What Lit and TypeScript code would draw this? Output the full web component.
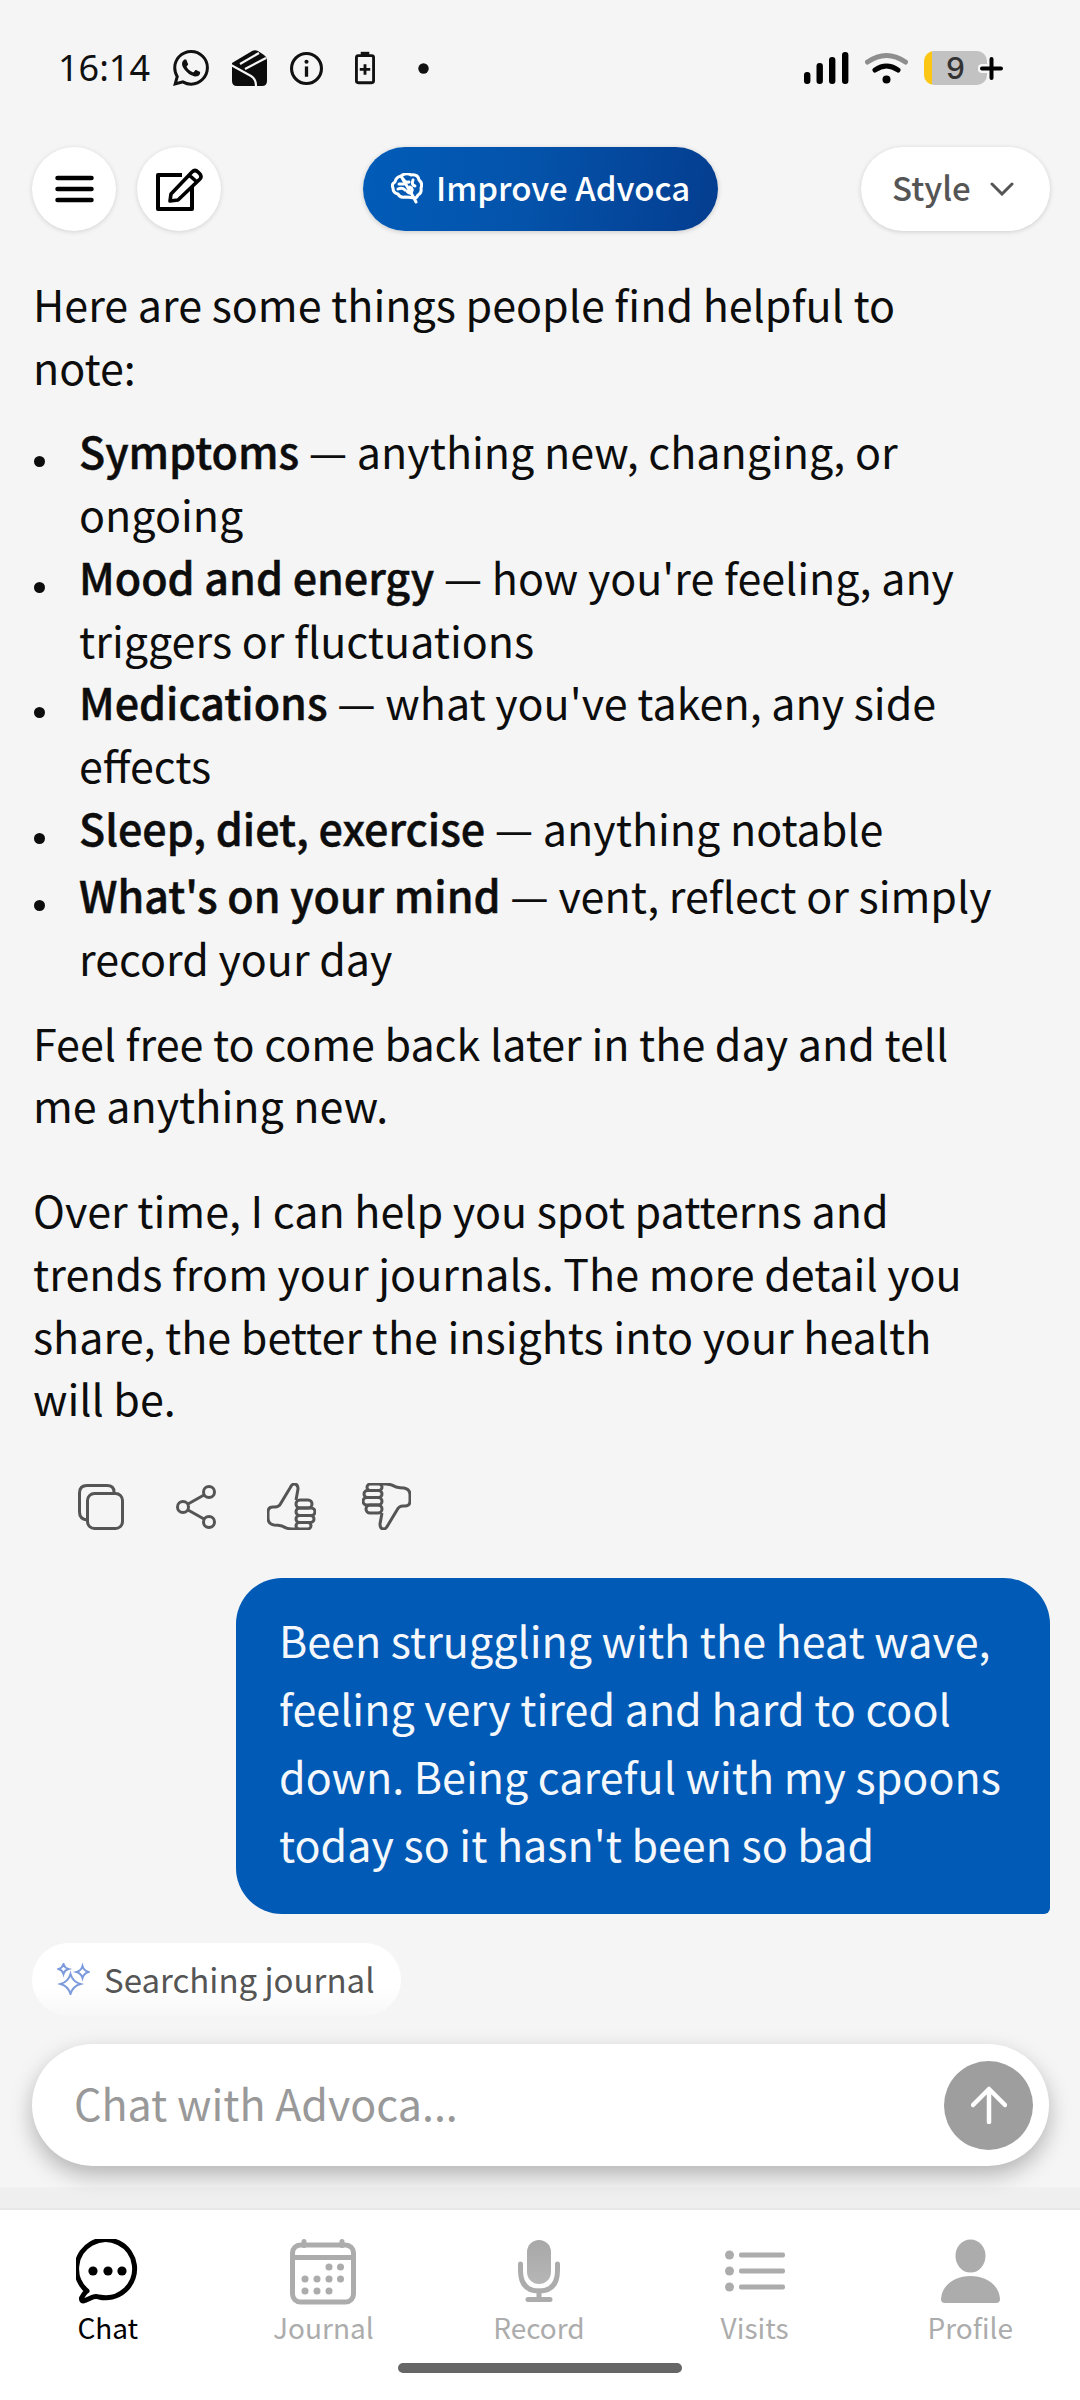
import { LitElement, html, css, svg } from "lit";
import { customElement } from "lit/decorators.js";

const thumb = svg`<path d="M29 17 L31 6 Q31 1 27 1 Q25 1 23 5 L14 20 Q12 24 8 24 H6 Q1 24 1 29 V35 Q1 41 7 42 Q11 42 15 43 Q20 46 25 46 H30"/>
  <rect x="29" y="17" width="16" height="8" rx="4"/><rect x="29" y="25" width="19" height="7.5" rx="3.7"/><rect x="29" y="32.5" width="18" height="7" rx="3.5"/><rect x="29" y="39.5" width="15" height="6.5" rx="3.2"/>`;

const star = (cx: number, cy: number, r: number) => {
  const k = r * 0.22;
  return svg`<path d="M${cx} ${cy - r} Q${cx + k} ${cy - k} ${cx + r} ${cy} Q${cx + k} ${cy + k} ${cx} ${cy + r} Q${cx - k} ${cy + k} ${cx - r} ${cy} Q${cx - k} ${cy - k} ${cx} ${cy - r}Z"/>`;
};

const navItems = [
  { label: "Chat", active: true, icon: svg`<svg width="64" height="66" viewBox="0 0 64 66"><path d="M11 52 A29 29 0 1 1 23 58 Q20 57 17 58 L9 61.5 Q5 63 5.5 59 L8 55 Q9.500 53 11 52Z" fill="none" stroke="#000" stroke-width="5" stroke-linejoin="round"/><circle cx="17" cy="32" r="4.6"/><circle cx="32" cy="32" r="4.6"/><circle cx="46" cy="32" r="4.6"/></svg>` },
  { label: "Journal", icon: svg`<svg width="66" height="66" viewBox="0 0 66 66" fill="#acacac"><rect x="2.5" y="6" width="61" height="57" rx="8" fill="none" stroke="#acacac" stroke-width="5"/><rect x="2" y="16" width="62" height="5"/><rect x="11.500" y="0" width="5" height="9" rx="2.5"/><rect x="49.500" y="0" width="5" height="9" rx="2.5"/>${[[39, 28], [50.5, 28], [15, 40], [27, 40], [39, 40], [50.5, 40], [15, 52], [27, 52], [39, 52]].map(([x, y]) => svg`<circle cx="${x}" cy="${y}" r="3.5"/>`)}</svg>` },
  { label: "Record", icon: svg`<svg width="42" height="66" viewBox="0 0 42 66"><defs><linearGradient id="m" x1="0" y1="0" x2="0" y2="1"><stop offset="0" stop-color="#a8a8a8"/><stop offset="1" stop-color="#b6b6b6"/></linearGradient></defs><rect x="9" y="1" width="24" height="44" rx="12" fill="url(#m)"/><path d="M2.500 25 V31 Q2.500 52 21 52 Q39.500 52 39.500 31 V25" fill="none" stroke="#acacac" stroke-width="5" stroke-linecap="round"/><path d="M21 52 V60 M10 60.500 H32" fill="none" stroke="#acacac" stroke-width="5" stroke-linecap="round"/></svg>` },
  { label: "Visits", icon: svg`<svg width="60" height="66" viewBox="0 0 60 66" fill="#acacac"><circle cx="4.500" cy="16" r="4.500"/><circle cx="4.500" cy="32" r="4.500"/><circle cx="4.500" cy="48" r="4.500"/><rect x="14" y="13.5" width="46" height="5" rx="2"/><rect x="14" y="29.5" width="46" height="5" rx="2"/><rect x="14" y="45.5" width="46" height="5" rx="2"/></svg>` },
  { label: "Profile", icon: svg`<svg width="61" height="66" viewBox="0 0 61 66" fill="#acacac"><ellipse cx="30.500" cy="17" rx="15" ry="16.5"/><path d="M1 60 C2 45 16 37 30.500 37 C45 37 59 45 60 60 Q60 64 56 64 H5 Q1 64 1 60Z"/></svg>` },
];

@customElement("app-root")
export class AppRoot extends LitElement {
  static styles = css`
    :host { display: flex; flex-direction: column; width: 1080px; height: 2400px; background: #f5f5f5; font-family: "Noto Sans CJK SC", "Noto Sans", sans-serif; color: #0d0d0d; overflow: hidden; }
    svg { display: block; flex: none; }
    .status { height: 147px; flex: none; box-sizing: border-box; padding: 50px 75px 0 58px; display: flex; align-items: flex-start; }
    .time { font-family: "Noto Sans", sans-serif; font-size: 36px; line-height: 36px; height: 36px; color: #111; width: 115px; }
    .st-icons { display: flex; align-items: center; height: 36px; }
    .st-icons.left svg:nth-child(1) { margin-right: 22px; }
    .st-icons.left svg:nth-child(2) { margin-right: 23px; }
    .st-icons.left svg:nth-child(3) { margin-right: 32px; }
    .st-icons.left svg:nth-child(4) { margin-right: 43px; }
    .st-right { margin-left: auto; display: flex; align-items: center; height: 36px; }
    .wifi { margin-left: 16px; }
    .batt { width: 63px; height: 34px; border-radius: 10px; background: linear-gradient(90deg, #fcc615 7.5px, #c2c2c2 7.5px); font-family: "Inter", sans-serif; font-size: 30px; font-weight: 500; color: #333; display: flex; align-items: center; justify-content: center; margin-left: 16px; box-sizing: border-box; }
    .plus { margin-left: -9px; }

    .header { flex: none; height: 84px; padding: 0 30px 0 32px; display: flex; align-items: center; }
    .round { width: 84px; height: 84px; border-radius: 50%; background: #fff; box-shadow: 0 1px 5px rgba(0,0,0,.14); display: flex; align-items: center; justify-content: center; margin-right: 21px; }
    .improve { margin-left: 121px; width: 355px; height: 84px; border-radius: 42px; background: linear-gradient(100deg, #015cb8 0%, #0453ab 45%, #043d8f 100%); box-shadow: 0 1px 5px rgba(0,0,0,.18); color: #fff; font-size: 33px; font-weight: 500; display: flex; align-items: center; box-sizing: border-box; padding: 0 0 4px 28px; gap: 13px; }
    .style { margin-left: auto; width: 189px; height: 84px; border-radius: 42px; background: #fff; box-shadow: 0 1px 5px rgba(0,0,0,.16); color: #555; font-size: 33px; font-weight: 500; display: flex; align-items: center; box-sizing: border-box; padding: 0 0 4px 31px; gap: 19px; }
    .style svg, .improve svg { margin-top: 3px; }

    .chat { flex: 1; min-height: 0; overflow: hidden; padding: 41px 76px 0 33px; font-size: 43px; line-height: 62.7px; }
    p { margin: 0; }
    ul { margin: 22px 0 22px; padding: 0 0 0 46px; list-style: none; }
    li { text-indent: -46px; }
    li::before { content: ""; display: inline-block; width: 11px; height: 11px; border-radius: 50%; background: #0d0d0d; margin: 0 34px 0 1px; vertical-align: 2px; }
    b { font-weight: 500; -webkit-text-stroke: 0.5px #0d0d0d; }
    li.tall { margin-top: 5px; }
    .gap { margin-top: 42px; }
    .actions { display: flex; align-items: center; margin: 55px 0 0 45px; height: 46px; }
    .bubble { margin: 48px -46px 0 203px; box-sizing: border-box; background: #015ab5; color: #f4f8fc; border-radius: 46px 46px 6px 46px; padding: 27px 30px 37px 43px; line-height: 68px; font-size: 43px; }
    .chip { display: inline-flex; align-items: center; margin: 29px 0 0 -1px; height: 73px; width: 369px; white-space: nowrap; box-sizing: border-box; padding-left: 25px; gap: 14px; border-radius: 37px; background: linear-gradient(#fff 62%, #f7f7f7 100%); color: #555; font-size: 33px; line-height: 73px; }

    .input { flex: none; margin: 0 31px 0 32px; height: 122px; border-radius: 61px; background: #fff; box-shadow: 0 9px 22px rgba(0,0,0,.27); display: flex; align-items: center; box-sizing: border-box; padding: 0 16px 0 42px; position: relative; z-index: 1; }
    .input span { flex: 1; color: #999; font-size: 43px; padding-bottom: 7px; }
    .send { width: 89px; height: 89px; border-radius: 50%; background: #9e9e9e; display: flex; align-items: center; justify-content: center; }
    .fade { flex: none; height: 42px; background: linear-gradient(#f5f5f5 50%, #f0f0f0 52%, #eeeeee 100%); }

    .nav { flex: none; height: 192px; box-sizing: border-box; background: #fff; border-top: 2px solid #e8e8e8; display: flex; flex-direction: column; align-items: stretch; padding-top: 29px; }
    .tabs { display: grid; grid-template-columns: repeat(5, 215.6px); }
    .tab { display: flex; flex-direction: column; align-items: center; color: #acacac; font-size: 28px; line-height: 44px; }
    .tab.active { color: #000; }
    .home { margin: 14px auto 0; width: 284px; height: 10px; border-radius: 5px; background: #666; }
  `;

  render() {
    return html`
      <div class="status">
        <div class="time">16:14</div>
        <div class="st-icons left">
          <svg width="36" height="36" viewBox="0 0 24 24"><path fill="#111" d="M17.472 14.382c-.297-.149-1.758-.867-2.03-.967-.273-.099-.471-.148-.67.15-.197.297-.767.966-.94 1.164-.173.199-.347.223-.644.075-.297-.15-1.255-.463-2.39-1.475-.883-.788-1.48-1.761-1.653-2.059-.173-.297-.018-.458.13-.606.134-.133.298-.347.446-.52.149-.174.198-.298.298-.497.099-.198.05-.371-.025-.52-.075-.149-.669-1.612-.916-2.207-.242-.579-.487-.5-.669-.51-.173-.008-.371-.01-.57-.01-.198 0-.52.074-.792.372-.272.297-1.04 1.016-1.04 2.479 0 1.462 1.065 2.875 1.213 3.074.149.198 2.096 3.2 5.077 4.487.709.306 1.262.489 1.694.625.712.227 1.36.195 1.871.118.571-.085 1.758-.719 2.006-1.413.248-.694.248-1.289.173-1.413-.074-.124-.272-.198-.57-.347m-5.421 7.403h-.004a9.87 9.87 0 01-5.031-1.378l-.361-.214-3.741.982.998-3.648-.235-.374a9.86 9.86 0 01-1.51-5.26c.001-5.45 4.436-9.884 9.888-9.884 2.64 0 5.122 1.03 6.988 2.898a9.825 9.825 0 012.893 6.994c-.003 5.45-4.437 9.884-9.885 9.884m8.413-18.297A11.815 11.815 0 0012.05 0C5.495 0 .16 5.335.157 11.892c0 2.096.547 4.142 1.588 5.945L.057 24l6.305-1.654a11.882 11.882 0 005.683 1.448h.005c6.554 0 11.89-5.335 11.893-11.893a11.821 11.821 0 00-3.48-8.413z"/></svg>
          <svg width="36" height="36" viewBox="0 0 36 36"><path fill="#0c0c0c" d="M1 13 L21 1 Q24 -0.5 27 1 L33 5 Q36 7 36 10 V31 Q36 36 31 36 H6 Q1 36 1 31Z"/><path d="M0 15 L20 26 Q25 29 25 36 M4 9 L20 0 M9 14 L28 3 M14 19 L35 8" fill="none" stroke="#f5f5f5" stroke-width="2.2"/></svg>
          <svg width="33" height="33" viewBox="0 0 32 32"><circle cx="16" cy="16" r="14.5" fill="none" stroke="#111" stroke-width="3"/><rect x="14.4" y="14" width="3.2" height="10" fill="#111"/><circle cx="16" cy="9.5" r="2" fill="#111"/></svg>
          <svg width="20" height="34" viewBox="0 0 21 34"><rect x="6" y="0" width="9" height="4" fill="#111"/><rect x="1.5" y="4" width="18" height="28.5" rx="2" fill="none" stroke="#111" stroke-width="3"/><path d="M10.5 13 V24 M5 18.500 H16" stroke="#111" stroke-width="3"/></svg>
          <svg width="11" height="11" viewBox="0 0 11 11"><circle cx="5.500" cy="5.500" r="5.200" fill="#111"/></svg>
        </div>
        <div class="st-right">
          <svg width="45" height="32" viewBox="0 0 45 32" fill="#000"><rect x="0" y="20" width="6.400" height="12" rx="3"/><rect x="12.500" y="11" width="6.400" height="21" rx="3"/><rect x="25" y="5" width="6.400" height="27" rx="3"/><rect x="38" y="0" width="6.400" height="32" rx="3"/></svg>
          <svg class="wifi" width="43" height="32" viewBox="0 0 43 32"><path d="M2.500 10 Q21.500 -3 40.500 10" fill="none" stroke="#8e8e8e" stroke-width="5" stroke-linecap="round"/><path d="M10 18 Q21.500 10 33 18" fill="none" stroke="#000" stroke-width="5" stroke-linecap="round"/><circle cx="21.500" cy="27.500" r="4" fill="#000"/></svg>
          <div class="batt">9</div>
          <svg class="plus" width="27" height="27" viewBox="0 0 27 27"><path d="M13.500 4 V23 M4 13.500 H23" stroke="#f5f5f5" stroke-width="9" stroke-linecap="round"/><path d="M13.500 4 V23 M4 13.500 H23" stroke="#000" stroke-width="4" stroke-linecap="round"/></svg>
        </div>
      </div>

      <div class="header">
        <div class="round"><svg width="39" height="28" viewBox="0 0 39 28"><path d="M2.500 3 H36.500 M2.500 14 H36.500 M2.500 25 H36.500" stroke="#000" stroke-width="4.500" stroke-linecap="round"/></svg></div>
        <div class="round"><svg width="47" height="43" viewBox="0 0 47 43"><path d="M26 7 H2 V41 H36 V19" fill="none" stroke="#000" stroke-width="4" stroke-linejoin="round"/><path d="M14 33 L15 26 L36 4 Q39 1 42 4 L44 6 Q46 9 44 11 L22 32Z M33 7 L41 14" fill="none" stroke="#000" stroke-width="3.600" stroke-linejoin="round"/></svg></div>
        <div class="improve">
          <svg width="32" height="31" viewBox="0 0 32 31" fill="none" stroke="#fff" stroke-width="3" stroke-linecap="round" stroke-linejoin="round"><path d="M10 3 Q15 -1 20 2 Q27 1 28 7 Q32 10 30 15 Q31 20 27 22 Q25 26 23 25 L25 29 M23 25 Q18 24 14 24 Q9 25 7 21 Q2 20 2 15 Q0 11 4 9 Q5 4 10 3Z"/><path d="M8 11 H13 M12 6 Q14 10 18 9 M22 7 Q20 12 24 13 M7 16 Q11 14 14 17 M19 14 Q23 16 20 20 Q17 20 16 18"/></svg>
          Improve Advoca
        </div>
        <div class="style">Style<svg width="24" height="14" viewBox="0 0 24 14"><path d="M2 2 L12 12 L22 2" fill="none" stroke="#555" stroke-width="3" stroke-linecap="round"/></svg></div>
      </div>

      <div class="chat">
        <p>Here are some things people find helpful to note:</p>
        <ul>
          <li><b>Symptoms</b> — anything new, changing, or ongoing</li>
          <li><b>Mood and energy</b> — how you're feeling, any triggers or fluctuations</li>
          <li><b>Medications</b> — what you've taken, any side effects</li>
          <li><b>Sleep, diet, exercise</b> — anything notable</li>
          <li class="tall"><b>What's on your mind</b> — vent, reflect or simply record your day</li>
        </ul>
        <p>Feel free to come back later in the day and tell me anything new.</p>
        <p class="gap">Over time, I can help you spot patterns and trends from your journals. The more detail you share, the better the insights into your health will be.</p>
        <div class="actions">
          <svg width="46" height="46" viewBox="0 0 46 46" fill="none" stroke="#555" stroke-width="3"><path d="M36 9 V8 Q36 1.500 29 1.500 H9 Q1.500 1.500 1.500 9 V28 Q1.500 35 9 36"/><rect x="9.500" y="9.500" width="35" height="35" rx="7"/></svg>
          <svg width="40" height="44" viewBox="0 0 40 44" style="margin-left:52px" fill="none" stroke="#555" stroke-width="3"><circle cx="7" cy="22" r="5.500"/><circle cx="33" cy="7" r="5.500"/><circle cx="33" cy="37" r="5.500"/><path d="M12 19 L28 10 M12 25 L28 34"/></svg>
          <svg width="49" height="47" viewBox="0 0 49 47" style="margin-left:51px" fill="none" stroke="#555" stroke-width="3">${thumb}</svg>
          <svg width="49" height="47" viewBox="0 0 49 47" style="margin-left:46px;transform:rotate(180deg)" fill="none" stroke="#555" stroke-width="3">${thumb}</svg>
        </div>
        <div class="bubble">Been struggling with the heat wave, feeling very tired and hard to cool down. Being careful with my spoons today so it hasn't been so bad</div>
        <div class="chip">
          <svg width="33" height="32" viewBox="0 0 32 32" fill="none" stroke="#7d9bdc" stroke-width="2">${star(6, 6, 5)}${star(25, 9, 6)}${star(13, 21, 10)}</svg>
          Searching journal
        </div>
      </div>

      <div class="input">
        <span>Chat with Advoca...</span>
        <div class="send"><svg width="36" height="38" viewBox="0 0 36 38"><path d="M18 36 V3 M2 19 L18 3 L34 19" fill="none" stroke="#fff" stroke-width="4.500" stroke-linecap="round" stroke-linejoin="round"/></svg></div>
      </div>
      <div class="fade"></div>

      <div class="nav">
        <div class="tabs">
          ${navItems.map((n) => html`<div class="tab ${n.active ? "active" : ""}">${n.icon}${n.label}</div>`)}
        </div>
        <div class="home"></div>
      </div>
    `;
  }
}
